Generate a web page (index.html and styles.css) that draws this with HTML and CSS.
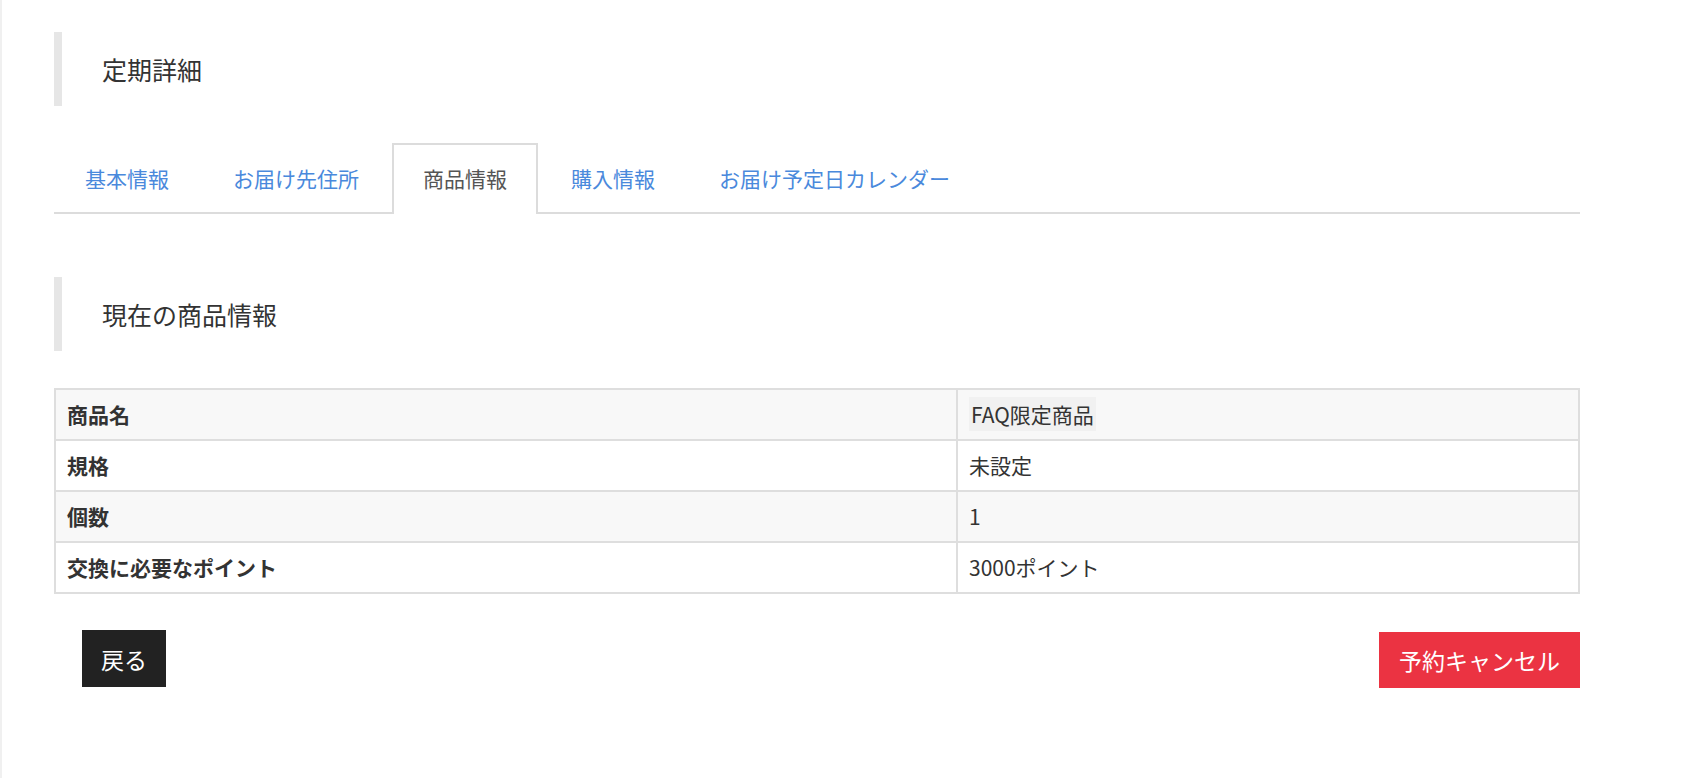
FILE: index.html
```html
<!DOCTYPE html>
<html lang="ja">
<head>
    <meta charset="UTF-8">
    <meta name="viewport" content="width=device-width, initial-scale=1.0">
    <title>定期詳細</title>
    <link rel="stylesheet" href="styles.css">
</head>
<body>
    <div class="page">
        <div class="main">
            <h2 class="section-title">定期詳細</h2>

            <ul class="tabs">
                <li class="tab"><a href="#">基本情報</a></li>
                <li class="tab"><a href="#">お届け先住所</a></li>
                <li class="tab active"><a href="#">商品情報</a></li>
                <li class="tab"><a href="#">購入情報</a></li>
                <li class="tab"><a href="#">お届け予定日カレンダー</a></li>
            </ul>

            <h3 class="section-title sub">現在の商品情報</h3>

            <table class="info-table">
                <tr>
                    <th>商品名</th>
                    <td><span class="item-name">FAQ限定商品</span></td>
                </tr>
                <tr>
                    <th>規格</th>
                    <td>未設定</td>
                </tr>
                <tr>
                    <th>個数</th>
                    <td>1</td>
                </tr>
                <tr>
                    <th>交換に必要なポイント</th>
                    <td>3000ポイント</td>
                </tr>
            </table>

            <div class="actions">
                <button class="btn btn-back">戻る</button>
                <button class="btn btn-cancel">予約キャンセル</button>
            </div>
        </div>
    </div>
</body>
</html>
```

FILE: styles.css
```css
body {
    margin: 0;
    padding: 0;
    background-color: #fff;
    color: #333;
    font-family: "Noto Sans CJK JP", "Noto Sans", sans-serif;
}
.page {
    min-height: 778px;
    border-left: 2px solid #f0f0f0;
    box-sizing: border-box;
}
.main {
    width: 1526px;
    margin-left: 52px;
    padding-top: 32px;
}
.section-title {
    margin: 0;
    height: 74px;
    line-height: 74px;
    border-left: 8px solid #e6e6e6;
    padding-left: 40px;
    font-size: 25px;
    font-weight: normal;
    color: #333;
}
.section-title.sub {
    margin-top: 63px;
}
.tabs {
    list-style: none;
    margin: 37px 0 0;
    padding: 0;
    display: flex;
    border-bottom: 2px solid #dcdcdc;
}
.tab {
    margin-right: 2px;
    margin-bottom: -2px;
}
.tab a {
    display: block;
    padding: 17px 29px;
    line-height: 33px;
    font-size: 21px;
    color: #4a89dc;
    text-decoration: none;
    border: 2px solid transparent;
    border-bottom: none;
}
.tab.active a {
    color: #555;
    background-color: #fff;
    border-color: #dcdcdc;
    padding-bottom: 19px;
}
.info-table {
    width: 100%;
    margin-top: 37px;
    border-collapse: collapse;
    border: 2px solid #dedede;
    font-size: 21px;
}
.info-table th,
.info-table td {
    border: 2px solid #dedede;
    padding: 8px 11px;
    line-height: 33px;
    text-align: left;
    color: #333;
}
.info-table th {
    width: 878px;
    font-weight: bold;
}
.info-table tr:nth-child(odd) {
    background-color: #f8f8f8;
}
.item-name {
    background-color: #f1f1f1;
    padding: 2px 2px;
}
.actions {
    display: flex;
    justify-content: space-between;
    align-items: flex-start;
    margin-top: 36px;
    padding-left: 28px;
}
.btn {
    border: none;
    color: #fff;
    font-family: inherit;
    font-size: 23px;
    height: 57px;
    padding: 0 19px;
    cursor: pointer;
}
.btn-back {
    background-color: #222;
}
.btn-cancel {
    background-color: #eb3342;
    height: 56px;
    padding: 0 20px;
    margin-top: 2px;
}
```
